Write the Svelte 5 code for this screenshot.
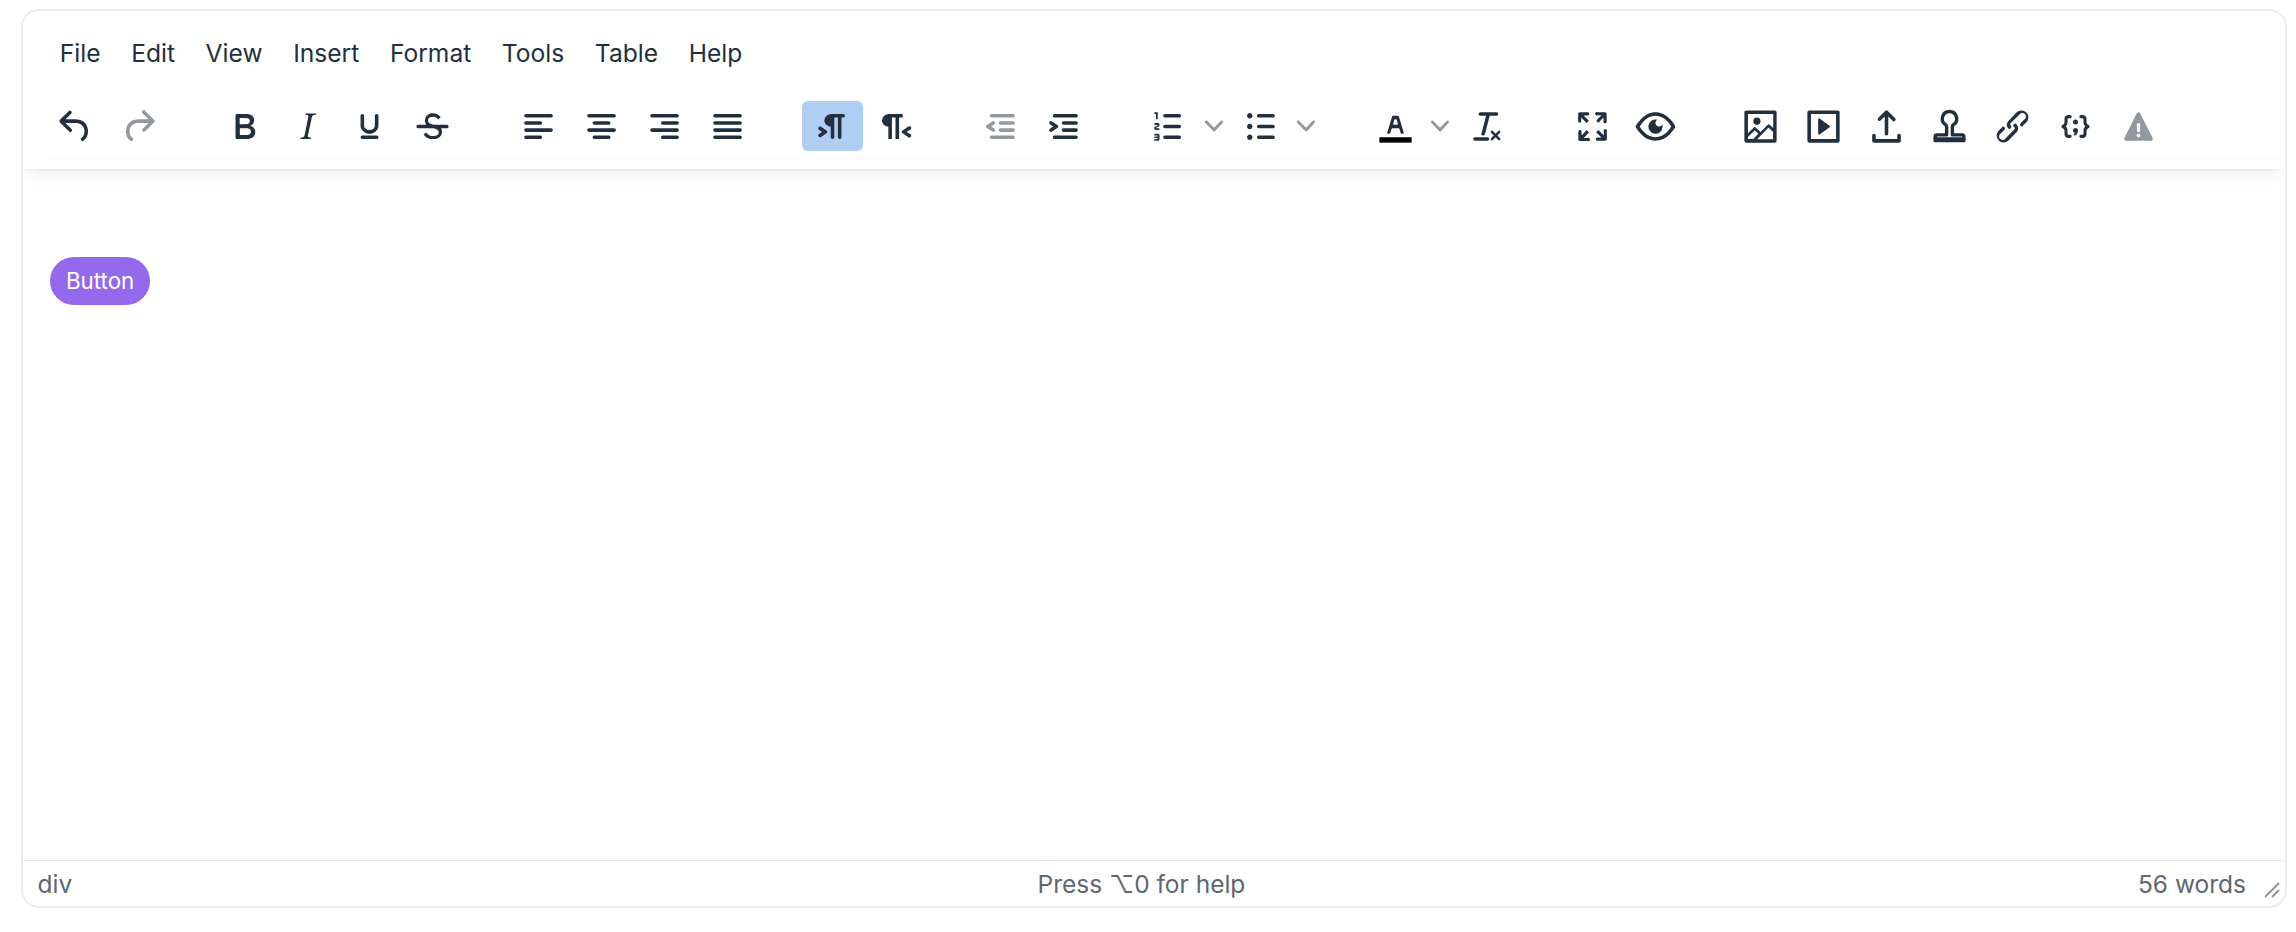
<script>
  // TinyMCE-style editor chrome, everything scaled up by about 1.786
  const icons = {
    undo: 'M6.4 8H12c3.7 0 6.2 2 6.8 5.1.6 2.7-.4 5.6-2.3 6.8a1 1 0 01-1-1.8c1.1-.6 1.8-2.7 1.4-4.6-.5-2.1-2.1-3.5-4.9-3.5H6.4l3.3 3.3a1 1 0 11-1.4 1.4l-5-5a1 1 0 010-1.4l5-5a1 1 0 011.4 1.4L6.4 8z',
    redo: 'M17.6 10H12c-2.8 0-4.4 1.4-4.9 3.5-.4 2 .3 4 1.4 4.6a1 1 0 11-1 1.8c-2-1.2-2.9-4.1-2.3-6.8.6-3 3-5.1 6.8-5.1h5.6l-3.3-3.3a1 1 0 111.4-1.4l5 5a1 1 0 010 1.4l-5 5a1 1 0 01-1.4-1.4l3.3-3.3z',
    bold: 'M7.8 19c-.3 0-.5 0-.6-.2l-.2-.5V5.7c0-.2 0-.4.2-.5l.6-.2h5c1.5 0 2.7.3 3.5 1 .7.6 1.1 1.4 1.1 2.5a3 3 0 01-.6 1.9c-.4.6-1 1-1.6 1.2.4.1.9.3 1.3.6s.8.7 1 1.2c.4.4.5 1 .5 1.6 0 1.3-.4 2.3-1.3 3-.8.7-2.1 1-3.8 1H7.8zm5-8.3c.6 0 1.2-.1 1.6-.5.4-.3.6-.7.6-1.3 0-1.1-.8-1.7-2.3-1.7H9.3v3.5h3.4zm.5 6c.7 0 1.3-.1 1.7-.4.4-.4.6-.9.6-1.5s-.2-1-.7-1.4c-.4-.3-1-.4-2-.4H9.4v3.8h4z',
    italic: 'M16.7 4.7l-.1.9h-.3c-.6 0-1 0-1.4.3-.3.3-.4.6-.5 1.1l-2.1 9.8v.6c0 .5.4.8 1.4.8h.2l-.2.8H8l.2-.8h.2c1.1 0 1.8-.5 2-1.5l2-9.8.1-.5c0-.6-.4-.8-1.4-.8h-.3l.2-.9h5.8z',
    underline: 'M16 5c.6 0 1 .4 1 1v5.5a4 4 0 01-.4 1.8l-1 1.4a5.3 5.3 0 01-5.5 1 5 5 0 01-1.6-1c-.5-.4-.8-.9-1.1-1.4a4 4 0 01-.4-1.8V6c0-.6.4-1 1-1s1 .4 1 1v5.5c0 .3 0 .6.2 1l.6.7a3.3 3.3 0 002.2.8 3.4 3.4 0 002.2-.8c.3-.2.4-.5.6-.8l.2-.9V6c0-.6.4-1 1-1zM8 17h8c.6 0 1 .4 1 1s-.4 1-1 1H8a1 1 0 010-2z',
    strike: 'M15.6 8.5c-.5-.7-1-1.1-1.3-1.3-.6-.4-1.3-.6-2-.6-2.7 0-2.8 1.7-2.8 2.1 0 1.6 1.8 2 3.2 2.3 4.4.9 4.6 2.8 4.6 3.9 0 1.4-.7 4.1-5 4.1A6.2 6.2 0 017 16.4l1.5-1.1c.4.6 1.6 2 3.7 2 1.6 0 2.5-.4 3-1 .3-.4.3-.9.3-1.2 0-.6-.1-1.5-3-2.1-1.7-.4-4.7-1.1-4.7-4.4a3.8 3.8 0 011.9-3.3c.6-.4 1.5-.7 2.5-.7 1.7 0 3.3.8 4.4 2.2l-1.5 1.3z M4 11h16c.6 0 1 .4 1 1s-.4 1-1 1H4a1 1 0 010-2z',
    alignLeft: 'M5 5h14c.6 0 1 .4 1 1s-.4 1-1 1H5a1 1 0 110-2zm0 4h8c.6 0 1 .4 1 1s-.4 1-1 1H5a1 1 0 110-2zm0 8h8c.6 0 1 .4 1 1s-.4 1-1 1H5a1 1 0 010-2zm0-4h14c.6 0 1 .4 1 1s-.4 1-1 1H5a1 1 0 010-2z',
    alignCenter: 'M5 5h14c.6 0 1 .4 1 1s-.4 1-1 1H5a1 1 0 110-2zm3 4h8c.6 0 1 .4 1 1s-.4 1-1 1H8a1 1 0 110-2zm0 8h8c.6 0 1 .4 1 1s-.4 1-1 1H8a1 1 0 010-2zm-3-4h14c.6 0 1 .4 1 1s-.4 1-1 1H5a1 1 0 010-2z',
    alignRight: 'M5 5h14c.6 0 1 .4 1 1s-.4 1-1 1H5a1 1 0 110-2zm6 4h8c.6 0 1 .4 1 1s-.4 1-1 1h-8a1 1 0 010-2zm0 8h8c.6 0 1 .4 1 1s-.4 1-1 1h-8a1 1 0 010-2zm-6-4h14c.6 0 1 .4 1 1s-.4 1-1 1H5a1 1 0 010-2z',
    justify: 'M5 5h14c.6 0 1 .4 1 1s-.4 1-1 1H5a1 1 0 110-2zm0 4h14c.6 0 1 .4 1 1s-.4 1-1 1H5a1 1 0 110-2zm0 4h14c.6 0 1 .4 1 1s-.4 1-1 1H5a1 1 0 010-2zm0 4h14c.6 0 1 .4 1 1s-.4 1-1 1H5a1 1 0 010-2z',
    ltr: 'M11 5h7a1 1 0 010 2h-1v11a1 1 0 01-2 0V7h-2v11a1 1 0 01-2 0v-6c-.5 0-1 0-1.4-.3A3.4 3.4 0 017.8 10a3.3 3.3 0 010-2.8 3.4 3.4 0 011.8-1.8L11 5zM4.4 16.2L6.2 15l-1.8-1.2a1 1 0 011.2-1.6l3 2a1 1 0 010 1.6l-3 2a1 1 0 11-1.2-1.6z',
    rtl: 'M8 5h8v2h-2v12h-2V7h-2v12H8v-7c-.5 0-1 0-1.4-.3A3.4 3.4 0 014.8 10a3.3 3.3 0 010-2.8 3.4 3.4 0 011.8-1.8L8 5zm12 11.2a1 1 0 11-1 1.6l-3-2a1 1 0 010-1.6l3-2a1 1 0 111 1.6L18.2 15l1.8 1.2z',
    outdent: 'M7 5h12c.6 0 1 .4 1 1s-.4 1-1 1H7a1 1 0 110-2zm5 4h7c.6 0 1 .4 1 1s-.4 1-1 1h-7a1 1 0 010-2zm0 4h7c.6 0 1 .4 1 1s-.4 1-1 1h-7a1 1 0 010-2zm-5 4h12a1 1 0 010 2H7a1 1 0 010-2zm1.6-3.8a1 1 0 01-1.2 1.6l-3-2a1 1 0 010-1.6l3-2a1 1 0 011.2 1.6L6.8 12l1.8 1.2z',
    indent: 'M7 5h12c.6 0 1 .4 1 1s-.4 1-1 1H7a1 1 0 110-2zm5 4h7c.6 0 1 .4 1 1s-.4 1-1 1h-7a1 1 0 010-2zm0 4h7c.6 0 1 .4 1 1s-.4 1-1 1h-7a1 1 0 010-2zm-5 4h12a1 1 0 010 2H7a1 1 0 010-2zm-2.6-3.8L6.2 12l-1.8-1.2a1 1 0 011.2-1.6l3 2a1 1 0 010 1.6l-3 2a1 1 0 11-1.2-1.6z',
    numlist: 'M10 17h8c.6 0 1 .4 1 1s-.4 1-1 1h-8a1 1 0 010-2zm0-6h8c.6 0 1 .4 1 1s-.4 1-1 1h-8a1 1 0 010-2zm0-6h8c.6 0 1 .4 1 1s-.4 1-1 1h-8a1 1 0 110-2zM6 4v3.5c0 .3-.2.5-.5.5a.5.5 0 01-.5-.5V5h-.5a.5.5 0 010-1H6zm-1 8.8l.2.2h1.3c.3 0 .5.2.5.5s-.2.5-.5.5H4.9a1 1 0 01-.9-1V13c0-.4.3-.8.6-1l1.2-.4.2-.3a.2.2 0 00-.2-.2H4.5a.5.5 0 01-.5-.5c0-.3.2-.5.5-.5h1.6c.5 0 .9.4.9 1v.1c0 .4-.3.8-.6 1l-1.2.4-.2.3zM7 17v2c0 .6-.4 1-1 1H4.5a.5.5 0 010-1h1.2c.2 0 .3-.1.3-.3 0-.2-.1-.3-.3-.3H4.4a.4.4 0 110-.8h1.3c.2 0 .3-.1.3-.3 0-.2-.1-.3-.3-.3H4.5a.5.5 0 110-1H6c.6 0 1 .4 1 1z',
    bullist: 'M11 5h8c.6 0 1 .4 1 1s-.4 1-1 1h-8a1 1 0 010-2zm0 6h8c.6 0 1 .4 1 1s-.4 1-1 1h-8a1 1 0 010-2zm0 6h8c.6 0 1 .4 1 1s-.4 1-1 1h-8a1 1 0 010-2zM4.5 6c0-.4.1-.8.4-1 .3-.4.7-.5 1.1-.5.4 0 .8.1 1 .4.4.3.5.7.5 1.1 0 .4-.1.8-.4 1-.3.4-.7.5-1.1.5-.4 0-.8-.1-1-.4-.4-.3-.5-.7-.5-1.1zm0 6c0-.4.1-.8.4-1 .3-.4.7-.5 1.1-.5.4 0 .8.1 1 .4.4.3.5.7.5 1.1 0 .4-.1.8-.4 1-.3.4-.7.5-1.1.5-.4 0-.8-.1-1-.4-.4-.3-.5-.7-.5-1.1zm0 6c0-.4.1-.8.4-1 .3-.4.7-.5 1.1-.5.4 0 .8.1 1 .4.4.3.5.7.5 1.1 0 .4-.1.8-.4 1-.3.4-.7.5-1.1.5-.4 0-.8-.1-1-.4-.4-.3-.5-.7-.5-1.1z',
    forecolor: 'M8.7 16h-.8a.5.5 0 01-.5-.6l2.7-9c.1-.3.3-.4.5-.4h2.8c.2 0 .4.1.5.4l2.7 9a.5.5 0 01-.5.6h-.8a.5.5 0 01-.4-.4l-.7-2.2c0-.3-.3-.4-.5-.4h-3.4c-.2 0-.4.1-.5.4l-.7 2.2c0 .3-.2.4-.4.4zm2.6-7.6l-.6 2a.5.5 0 00.5.6h1.6a.5.5 0 00.5-.6l-.6-2c0-.3-.3-.4-.5-.4h-.4c-.2 0-.4.1-.5.4z',
    clear: 'M13.2 6a1 1 0 010 .2l-2.6 10a1 1 0 01-1 .8h-.2a.8.8 0 01-.8-1l2.6-10H8a1 1 0 110-2h9a1 1 0 010 2h-3.8zM5 18h7a1 1 0 010 2H5a1 1 0 010-2zm13 1.5L16.5 18 15 19.5a.7.7 0 01-1-1l1.5-1.5-1.5-1.5a.7.7 0 011-1l1.5 1.5 1.5-1.5a.7.7 0 011 1L17.5 17l1.5 1.5a.7.7 0 01-1 1z',
    fullscreen: 'M15.3 10l-1.2-1.3 2.9-3h-2.3a.9.9 0 110-1.7H19c.5 0 .9.4.9.9v4.4a.9.9 0 11-1.8 0V7l-2.9 3zm0 4l3 3v-2.3a.9.9 0 111.7 0V19c0 .5-.4.9-.9.9h-4.4a.9.9 0 110-1.8H17l-3-2.9 1.3-1.2zM10 15.4l-2.9 3h2.3a.9.9 0 110 1.7H5a.9.9 0 01-.9-.9v-4.4a.9.9 0 111.8 0V17l2.9-3 1.2 1.3zM8.7 10L5.7 7v2.3a.9.9 0 01-1.7 0V5c0-.5.4-.9.9-.9h4.4a.9.9 0 010 1.8H7l3 2.9-1.3 1.2z',
    preview: 'M3.5 12.5c.5.8 1.1 1.6 1.8 2.3 2 2 4.2 3.2 6.7 3.2s4.7-1.2 6.7-3.2a16.2 16.2 0 002.1-2.8 15.7 15.7 0 00-2.1-2.8c-2-2-4.2-3.2-6.7-3.2a9.3 9.3 0 00-6.7 3.2A16.2 16.2 0 003.2 12c0 .2.2.3.3.5zm-2.4-1l.7-1.2L4 7.8C6.2 5.4 8.9 4 12 4c3 0 5.8 1.4 8.1 3.8a18.2 18.2 0 012.8 3.7v1l-.7 1.2-2.1 2.5c-2.3 2.4-5 3.8-8.1 3.8a11 11 0 01-8.1-3.8 18.2 18.2 0 01-2.8-3.7 1 1 0 010-1zm12-3.3a2 2 0 102.7 2.6 4 4 0 11-2.7-2.6z',
    image: 'M5 15.7l3.3-3.2c.3-.3.7-.3 1 0L12 15l4.1-4c.3-.4.8-.4 1 0l2 1.9V5H5v10.7zM5 18V19h3l2.8-2.9-2-2L5 17.9zm14-3l-2.5-2.4-6.4 6.5H19v-4zM4 3h16c.6 0 1 .4 1 1v16c0 .6-.4 1-1 1H4a1 1 0 01-1-1V4c0-.6.4-1 1-1zm6 8a2 2 0 100-4 2 2 0 000 4z',
    media: 'M4 3h16c.6 0 1 .4 1 1v16c0 .6-.4 1-1 1H4a1 1 0 01-1-1V4c0-.6.4-1 1-1zm1 2v14h14V5H5zm4.8 2.6l5.6 4a.5.5 0 010 .8l-5.6 4A.5.5 0 019 16V8a.5.5 0 01.8-.4z',
    upload: 'M18 19v-2a1 1 0 012 0v3c0 .6-.4 1-1 1H5a1 1 0 01-1-1v-3a1 1 0 012 0v2h12zM11 6.4L8.7 8.7a1 1 0 01-1.4-1.4l4-4a1 1 0 011.4 0l4 4a1 1 0 11-1.4 1.4L13 6.4V16a1 1 0 01-2 0V6.4z',
    link: 'M6.2 12.3a1 1 0 011.4 1.4l-2 2a2 2 0 102.6 2.8l4.8-4.8a1 1 0 000-1.4 1 1 0 111.4-1.3 2.9 2.9 0 010 4L9.6 20a3.9 3.9 0 01-5.5-5.5l2-2zm11.6-.6a1 1 0 01-1.4-1.4l2-2a2 2 0 10-2.6-2.8L11 10a1 1 0 000 1.4A1 1 0 119.6 13a2.9 2.9 0 010-4L14.4 4a3.9 3.9 0 015.5 5.5l-2 2z',
    warning: 'M19.8 18.3c.2.5.3.9 0 1.2-.1.3-.5.5-1 .5H5.2c-.5 0-.9-.2-1-.5-.3-.3-.2-.7 0-1.2L11 4.7l.5-.5.5-.2c.2 0 .3 0 .5.2.2 0 .3.3.5.5l6.8 13.6zM12 18c.3 0 .5-.1.7-.3.2-.2.3-.4.3-.7a1 1 0 00-.3-.7 1 1 0 00-.7-.3 1 1 0 00-.7.3 1 1 0 00-.3.7c0 .3.1.5.3.7.2.2.4.3.7.3zm.7-3l.3-4a1 1 0 00-.3-.7 1 1 0 00-.7-.3 1 1 0 00-.7.3 1 1 0 00-.3.7l.3 4h1.4z'
  };

  const menus = ['File', 'Edit', 'View', 'Insert', 'Format', 'Tools', 'Table', 'Help'];

  const groups = [
    [{ d: icons.undo }, { d: icons.redo, off: true }],
    [{ d: icons.bold }, { d: icons.italic }, { d: icons.underline }, { d: icons.strike }],
    [{ d: icons.alignLeft }, { d: icons.alignCenter }, { d: icons.alignRight }, { d: icons.justify }],
    [{ d: icons.ltr, on: true }, { d: icons.rtl }],
    [{ d: icons.outdent, off: true }, { d: icons.indent }],
    [{ d: icons.numlist, split: true }, { d: icons.bullist, split: true }],
    [{ d: icons.forecolor, split: true, swatch: true }, { d: icons.clear }],
    [{ d: icons.fullscreen }, { d: icons.preview }],
    [{ d: icons.image }, { d: icons.media }, { d: icons.upload }, { kind: 'stamp' }, { d: icons.link }, { kind: 'code' }, { d: icons.warning, off: true }]
  ];
</script>

<div class="page">
  <div class="editor">
    <header class="head">
      <nav class="menubar">
        {#each menus as m}
          <span class="menu">{m}</span>
        {/each}
      </nav>
      <div class="toolbar">
        {#each groups as group}
          <div class="group">
            {#each group as b}
              <div class="tool" class:split={b.split}>
                <span class="btn" class:on={b.on} class:off={b.off}>
                  <svg viewBox="0 0 24 24" width="43" height="43">
                    {#if b.kind === 'stamp'}
                      <path d="M12 3.650a4 4 0 0 0-2.200 7.350c.4.3.6.7.6 1.200v4.500H5a1 1 0 0 0-1 1V19h16v-1.300a1 1 0 0 0-1-1h-5.400v-4.500c0-.5.2-.9.6-1.200A4 4 0 0 0 12 3.650z" fill="none" stroke="currentColor" stroke-width="1.900" stroke-linejoin="round" />
                      <rect x="3.100" y="18.400" width="17.800" height="2.400" rx=".6" />
                    {:else if b.kind === 'code'}
                      <path d="M9 6.500h-.7c-1 0-1.600.6-1.600 1.500v1.800c0 1-.6 1.700-1.700 2.200 1.100.5 1.700 1.200 1.700 2.200V16c0 .9.6 1.500 1.600 1.500H9M15 6.500h.7c1 0 1.600.6 1.600 1.500v1.800c0 1 .6 1.700 1.700 2.200-1.100.5-1.700 1.200-1.700 2.200V16c0 .9-.6 1.500-1.600 1.500H15" fill="none" stroke="currentColor" stroke-width="1.700" stroke-linecap="round" stroke-linejoin="round" />
                      <circle cx="12" cy="9.500" r="1.400" />
                      <path d="M12 12.900c.8 0 1.400.6 1.400 1.400 0 1.200-.6 2.200-1.800 2.900l-.6-.6c.4-.4.6-.8.7-1.200-.7-.1-1.100-.6-1.100-1.200 0-.7.6-1.300 1.400-1.300z" />
                    {:else}
                      <path d={b.d} />
                      {#if b.swatch}
                        <rect class="swatch" x="3" y="18" width="18" height="3" />
                      {/if}
                    {/if}
                  </svg>
                </span>
                {#if b.split}
                  <span class="chev">
                    <svg viewBox="0 0 10 10" width="18" height="18">
                      <path d="M8.700 2.200c.3-.3.800-.3 1 0 .4.400.4.900 0 1.200L5.700 7.800c-.3.300-.9.300-1.200 0L.2 3.400a.8.8 0 0 1 0-1.200c.3-.3.800-.3 1.100 0L5 6l3.700-3.800z" />
                    </svg>
                  </span>
                {/if}
              </div>
            {/each}
          </div>
        {/each}
      </div>
      <div class="rule"></div>
    </header>

    <main class="body">
      <span class="pill">Button</span>
    </main>

    <footer class="status">
      <span class="path">div</span>
      <span class="help">Press ⌥0 for help</span>
      <span class="right">
        <span>56 words</span>
        <svg class="grip" viewBox="0 0 16 16" width="16" height="16">
          <path d="M1 15 15 1M8 15l7-7" fill="none" stroke="#8b9098" stroke-width="1.800" />
        </svg>
      </span>
    </footer>
  </div>
</div>

<style>
  :global(body) {
    margin: 0;
    background: #fff;
  }

  .page {
    width: 2296px;
    height: 932px;
    box-sizing: border-box;
    padding: 9px 9px 24px 21px;
    font-family: Inter, "Noto Sans", sans-serif;
    color: #222f3e;
  }

  .editor {
    height: 100%;
    box-sizing: border-box;
    border: 2.700px solid #ececec;
    border-radius: 18px;
    display: flex;
    flex-direction: column;
    overflow: hidden;
    background: #fff;
  }

  .head {
    height: 158.300px;
    flex: none;
    box-sizing: border-box;
    padding: 0 0 0 22.500px;
    background: #fff;
    box-shadow: 0 3px 3px -3px rgba(34, 47, 62, 0.12), 0 14px 14px -7px rgba(34, 47, 62, 0.07);
    position: relative;
  }

  .menubar {
    display: flex;
    height: 62px;
    padding-top: 22px;
    box-sizing: border-box;
    align-items: center;
  }

  .menu {
    padding: 0 14.300px;
    margin-right: 2px;
    font-size: 24.600px;
    line-height: 1;
  }

  .toolbar {
    display: flex;
    gap: 44.500px;
    margin-top: 28.300px;
  }

  .group {
    display: flex;
    gap: 2.300px;
  }

  .tool {
    display: flex;
  }

  .tool.split {
    width: 89.900px;
  }

  .btn {
    width: 60.700px;
    height: 50px;
    flex: none;
    display: flex;
    align-items: center;
    justify-content: center;
    border-radius: 6px;
    color: #222f3e;
  }

  .btn svg {
    fill: currentColor;
    display: block;
  }

  .btn.on {
    background: #b0cdf4;
  }

  .btn.off {
    color: #93989f;
  }

  .swatch {
    fill: #000;
  }

  .chev {
    display: flex;
    align-items: center;
    justify-content: center;
    width: 30.400px;
    fill: #93989f;
  }

  .rule {
    height: 1px;
    margin-top: 8px;
    background: #fbfbfb;
  }

  .body {
    flex: 1;
    box-sizing: border-box;
    padding: 87.300px 0 0 27.300px;
    background: #fff;
  }

  .pill {
    display: inline-flex;
    align-items: center;
    justify-content: center;
    width: 99.600px;
    height: 48.600px;
    border-radius: 24px;
    background: #9569ec;
    color: #fff;
    font-size: 22.400px;
  }

  .status {
    height: 46px;
    flex: none;
    box-sizing: border-box;
    border-top: 1.800px solid #e6e6e6;
    display: grid;
    grid-template-columns: 1fr auto 1fr;
    align-items: center;
    padding: 0 5.500px 0 14.500px;
    font-size: 24.500px;
    color: #5f6670;
  }

  .help {
    margin-right: 34px;
  }

  .right {
    justify-self: end;
    display: flex;
    align-items: center;
    gap: 17.500px;
  }

  .grip {
    margin-top: 12px;
  }
</style>
